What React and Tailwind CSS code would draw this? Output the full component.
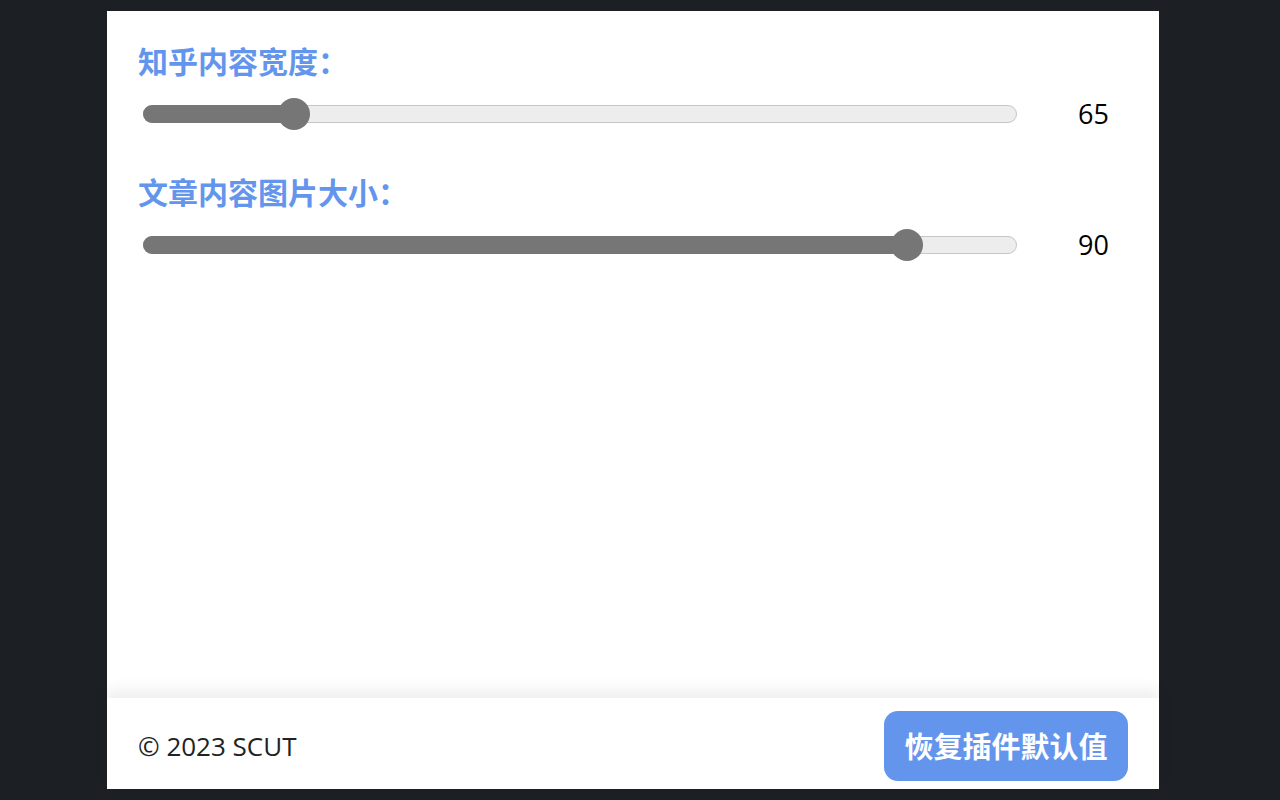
import React from 'react';

const cjk = '"Noto Sans CJK SC", "Noto Sans", sans-serif';
const latin = '"Open Sans", "Noto Sans CJK SC", sans-serif';

const sliders = [
  { label: '知乎内容宽度：', value: 65, pos: 17.16 },
  { label: '文章内容图片大小：', value: 90, pos: 87.5 },
];

const Slider = ({ pos }) => (
  <div className="relative ml-[5px] w-[874px] h-[18px] rounded-full border border-[#c6c6c6] bg-[#ededed]">
    <div className="absolute -left-px -top-px -bottom-px rounded-full bg-[#767676]" style={{ width: `${pos}%` }} />
    <div
      className="absolute top-1/2 w-[32px] h-[32px] -translate-x-1/2 -translate-y-1/2 rounded-full bg-[#767676]"
      style={{ left: `${pos}%` }}
    />
  </div>
);

export default function App() {
  return (
    <div className="w-full h-[800px] bg-[#1c2024] pl-[107px] pt-[11px]">
      <div className="w-[1052px] h-[778px] bg-white flex flex-col">
        <div className="flex-1 pl-[31px] pr-[50px] pt-[29px]">
          {sliders.map((s, i) => (
            <div key={i} className={i > 0 ? 'mt-[37px]' : ''}>
              <div className="h-[40px] leading-[40px] text-[30px] font-semibold text-[#6495ed]" style={{ fontFamily: cjk }}>
                {s.label}
              </div>
              <div className="mt-[14px] h-[40px] flex items-center">
                <Slider pos={s.pos} />
                <div className="flex-1 text-right text-[27px] text-black" style={{ fontFamily: latin }}>
                  {s.value}
                </div>
              </div>
            </div>
          ))}
        </div>
        <div className="h-[91px] shrink-0 flex items-center justify-between pl-[31px] pr-[31px] pt-[5px] bg-white shadow-[0_-8px_14px_rgba(0,0,0,0.07)]">
          <span className="text-[26px] text-[#222]" style={{ fontFamily: latin }}>© 2023 SCUT</span>
          <button
            className="w-[244px] h-[70px] rounded-[14px] bg-[#6495ed] text-white text-[29px] font-semibold"
            style={{ fontFamily: cjk }}
          >
            恢复插件默认值
          </button>
        </div>
      </div>
    </div>
  );
}
